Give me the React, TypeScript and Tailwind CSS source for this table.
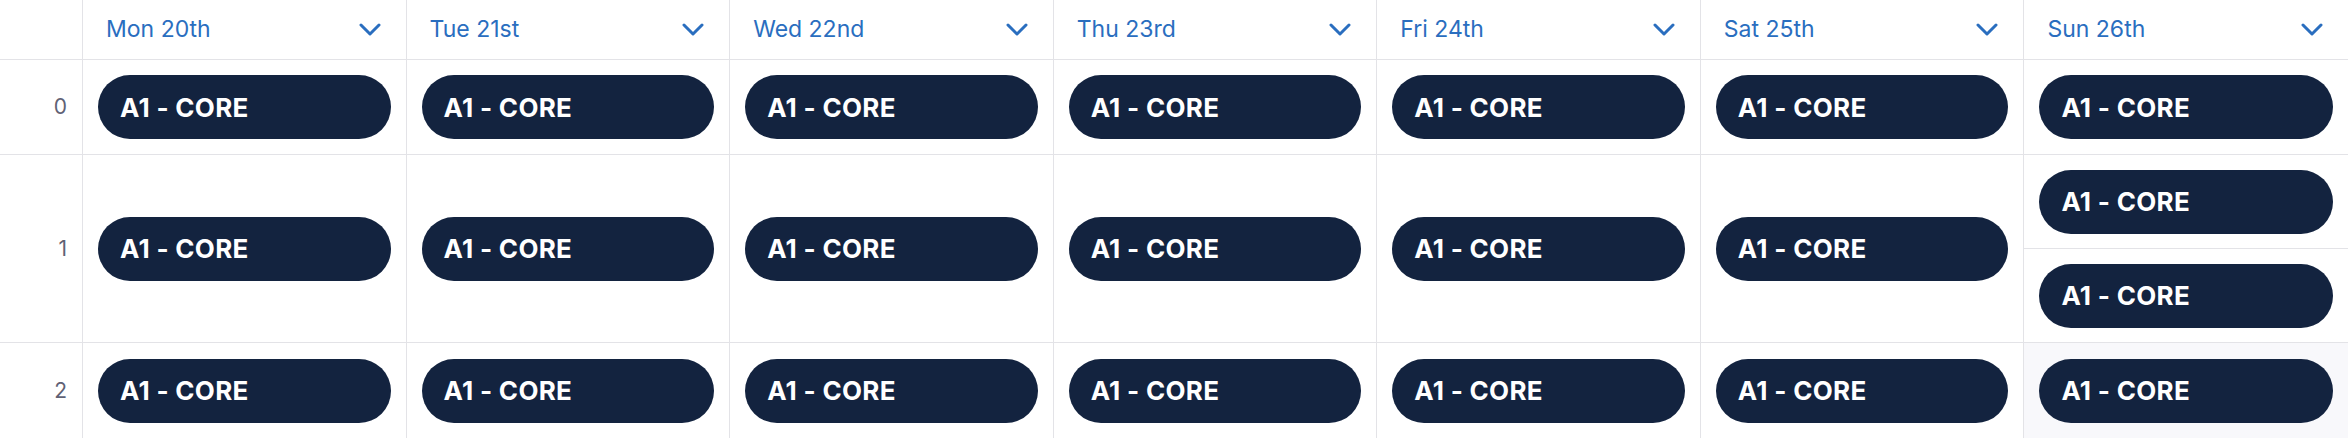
const DAYS = ['Mon 20th', 'Tue 21st', 'Wed 22nd', 'Thu 23rd', 'Fri 24th', 'Sat 25th', 'Sun 26th'];
const HOURS = [0, 1, 2];

function Chevron() {
  return (
    <svg width="22" height="13" viewBox="0 0 22 13" fill="none" className="shrink-0">
      <polyline points="2,2 11,11 20,2" stroke="#2a6ebf" strokeWidth="3" strokeLinecap="round" strokeLinejoin="round" />
    </svg>
  );
}

function Shift() {
  return (
    <div className="mx-[15px] flex h-16 items-center rounded-full bg-[#13233f] pl-[22px] text-[26px] font-bold tracking-[0.3px] text-white">
      A1 - CORE
    </div>
  );
}

export default function App() {
  const font = { fontFamily: 'Inter, "Noto Sans", sans-serif' };
  return (
    <div className="h-[438px] w-[2348px] overflow-hidden bg-white" style={font}>
      <div className="grid grid-cols-[83px_repeat(7,1fr)] grid-rows-[60px_95px_188px_95px]">
        {/* Header */}
        <div className="border-b border-r border-[#e3e3e7]" />
        {DAYS.map((d, i) => (
          <div
            key={d}
            className={`flex items-center justify-between border-b border-[#e3e3e7] pl-[23px] pr-[25px] text-[23px] text-[#2a6ebf] ${i < 6 ? 'border-r' : ''}`}
          >
            <span>{d}</span>
            <Chevron />
          </div>
        ))}

        {/* Rows */}
        {HOURS.map((h) => (
          <div key={h} className="contents">
            <div
              className={`flex items-center justify-end border-r border-[#e3e3e7] pr-[15px] text-[21px] text-[#5f6275] ${h < 2 ? 'border-b' : ''}`}
            >
              {h}
            </div>
            {DAYS.map((d, i) => {
              const border = `${i < 6 ? 'border-r' : ''} ${h < 2 ? 'border-b' : ''}`;
              if (i === 6 && h === 1) {
                return (
                  <div key={d} className={`flex flex-col border-[#e3e3e7] ${border}`}>
                    <div className="flex flex-1 items-center border-b border-[#e3e3e7]">
                      <div className="flex-1"><Shift /></div>
                    </div>
                    <div className="flex flex-1 items-center">
                      <div className="flex-1"><Shift /></div>
                    </div>
                  </div>
                );
              }
              return (
                <div
                  key={d}
                  className={`flex items-center border-[#e3e3e7] ${border} ${i === 6 && h === 2 ? 'bg-[#f8f8fb]' : ''}`}
                >
                  <div className="flex-1"><Shift /></div>
                </div>
              );
            })}
          </div>
        ))}
      </div>
    </div>
  );
}
